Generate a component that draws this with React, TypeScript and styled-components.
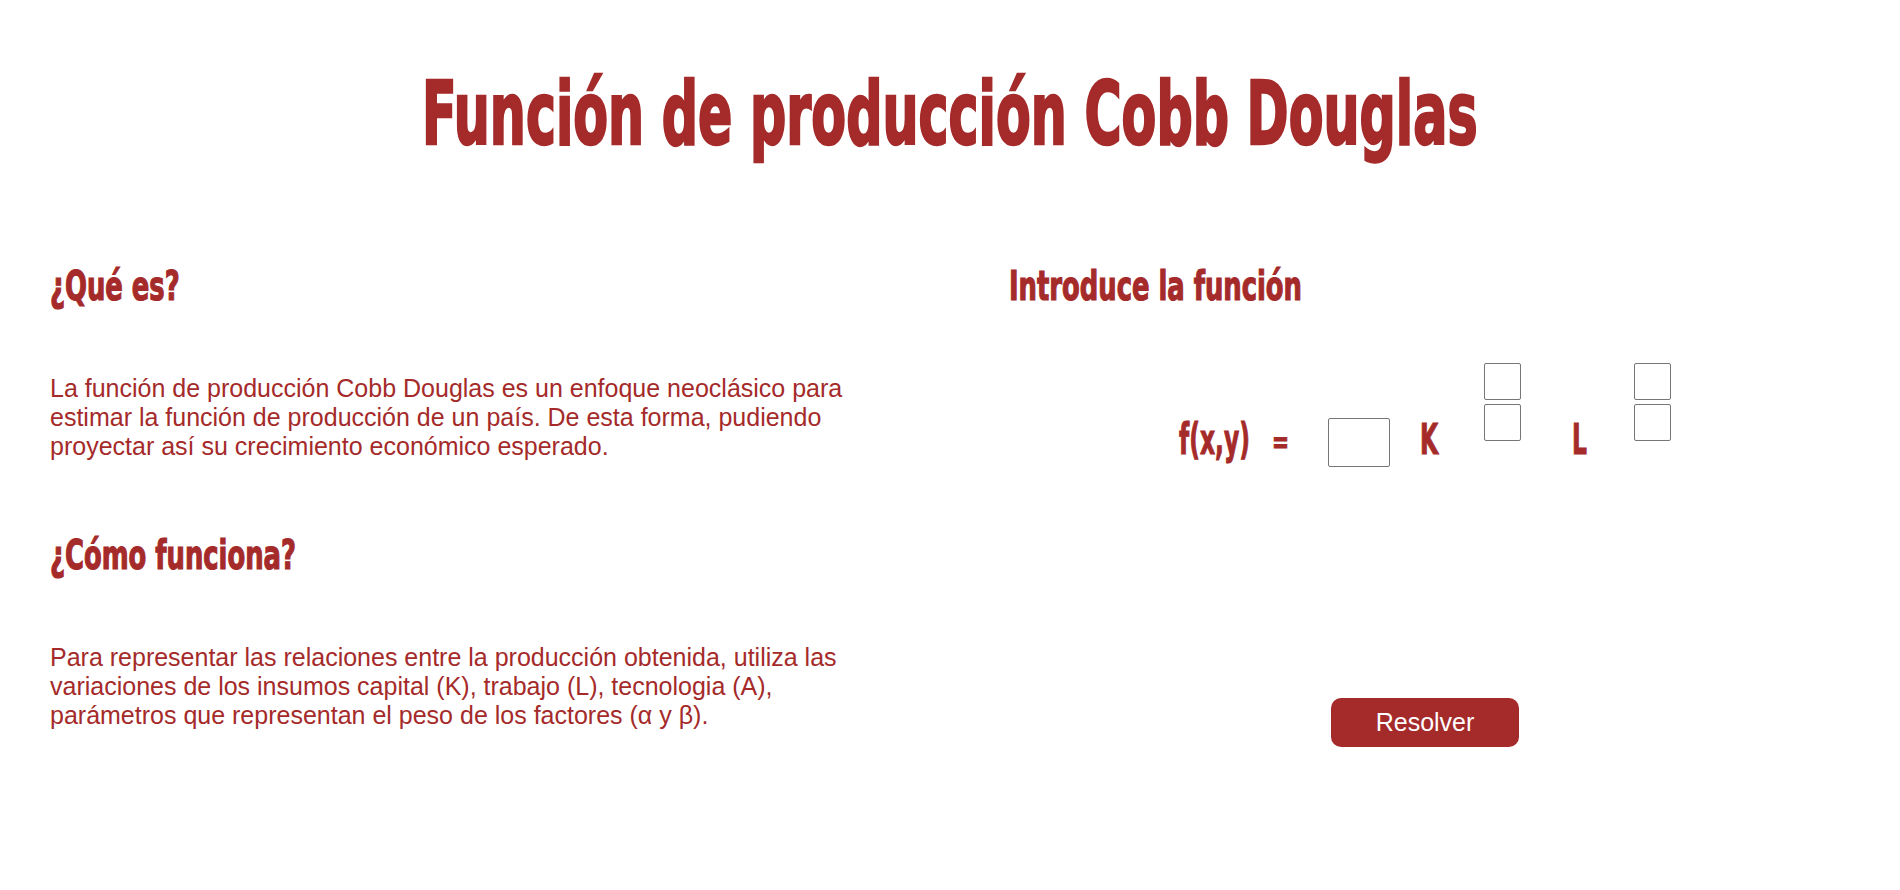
import React from "react";
import styled, { createGlobalStyle } from "styled-components";

const GlobalStyle = createGlobalStyle`
  html, body {
    margin: 0;
    padding: 0;
    background: #ffffff;
  }
  body {
    font-family: "Liberation Sans", Arial, sans-serif;
    color: #a52a2a;
  }
  * { box-sizing: border-box; }
`;

const BRAND = "#a52a2a";
const CONDENSED = `"Liberation Sans Narrow", "DejaVu Sans Condensed", "Liberation Sans", sans-serif`;

const Page = styled.main`
  width: 100%;
  min-height: 890px;
  padding-top: 70px;
`;

const Title = styled.h1`
  margin: 0 auto;
  width: fit-content;
  font-family: ${CONDENSED};
  font-weight: 700;
  font-size: 88px;
  line-height: 1;
  color: ${BRAND};
  -webkit-text-stroke: 2.5px ${BRAND};
  white-space: nowrap;
  transform: scaleX(0.64);
  transform-origin: center;
`;

const Columns = styled.div`
  display: grid;
  grid-template-columns: 1fr 1fr;
  margin-top: 108px;
`;

const Column = styled.section`
  display: flex;
  flex-direction: column;
  align-items: flex-start;
`;

const LeftColumn = styled(Column)`
  padding-left: 50px;
  padding-right: 40px;
`;

const RightColumn = styled(Column)`
  align-items: center;
`;

const Heading = styled.h2<{ $mt?: number; $indent?: number }>`
  margin: ${(p) => p.$mt ?? 0}px 0 0 ${(p) => p.$indent ?? 0}px;
  align-self: flex-start;
  width: fit-content;
  font-family: ${CONDENSED};
  font-weight: 700;
  font-size: 41px;
  line-height: 1;
  color: ${BRAND};
  -webkit-text-stroke: 1.2px ${BRAND};
  white-space: nowrap;
  transform: scaleX(0.7);
  transform-origin: left center;
`;

const Paragraph = styled.p`
  margin: 67px 0 0 0;
  max-width: 820px;
  font-family: "Liberation Sans", Arial, sans-serif;
  font-size: 25px;
  line-height: 29px;
  color: ${BRAND};
`;

const Formula = styled.div`
  display: flex;
  align-items: flex-start;
  margin-top: 56px;
  height: 104px;
`;

const Symbol = styled.span<{ $ml?: number; $w: number }>`
  display: block;
  flex: none;
  width: ${(p) => p.$w}px;
  margin-left: ${(p) => p.$ml ?? 0}px;
  margin-top: 56px;
  font-family: ${CONDENSED};
  font-weight: 700;
  font-size: 42px;
  line-height: 1;
  color: ${BRAND};
  -webkit-text-stroke: 1px ${BRAND};
  white-space: nowrap;
  transform: scaleX(0.62);
  transform-origin: left center;
`;

const Equals = styled(Symbol)`
  font-size: 30px;
  margin-top: 64px;
  transform: scaleX(0.75);
`;

const Field = styled.input<{ $w: number; $h: number }>`
  display: block;
  flex: none;
  width: ${(p) => p.$w}px;
  height: ${(p) => p.$h}px;
  padding: 0 4px;
  border: 1px solid #767676;
  border-radius: 2px;
  background: #ffffff;
  font-family: "Liberation Sans", Arial, sans-serif;
  font-size: 16px;
  color: #222;
  outline: none;
`;

const MainField = styled(Field)<{ $ml: number }>`
  margin-left: ${(p) => p.$ml}px;
  margin-top: 55px;
`;

const ExponentStack = styled.div<{ $ml: number }>`
  display: flex;
  flex-direction: column;
  flex: none;
  gap: 4px;
  margin-left: ${(p) => p.$ml}px;
`;

const SolveButton = styled.button`
  margin-top: 231px;
  width: 188px;
  height: 49px;
  border: none;
  border-radius: 10px;
  background: ${BRAND};
  color: #ffffff;
  font-family: "Liberation Sans", Arial, sans-serif;
  font-size: 25px;
  cursor: pointer;
`;

export default function App() {
  return (
    <>
      <GlobalStyle />
      <Page>
        <Title>Función de producción Cobb Douglas</Title>
        <Columns>
          <LeftColumn>
            <Heading>¿Qué es?</Heading>
            <Paragraph>
              La función de producción Cobb Douglas es un enfoque neoclásico para
              estimar la función de producción de un país. De esta forma, pudiendo
              proyectar así su crecimiento económico esperado.
            </Paragraph>
            <Heading $mt={74}>¿Cómo funciona?</Heading>
            <Paragraph>
              Para representar las relaciones entre la producción obtenida, utiliza las
              variaciones de los insumos capital (K), trabajo (L), tecnologia (A),
              parámetros que representan el peso de los factores (α y β).
            </Paragraph>
          </LeftColumn>
          <RightColumn>
            <Heading $indent={59}>Introduce la función</Heading>
            <Formula>
              <Symbol $w={70}>f(x,y)</Symbol>
              <Equals $w={12} $ml={23}>=</Equals>
              <MainField $w={62} $h={49} $ml={44} aria-label="A" />
              <Symbol $w={17} $ml={30}>K</Symbol>
              <ExponentStack $ml={47}>
                <Field $w={37} $h={37} aria-label="alfa numerador" />
                <Field $w={37} $h={37} aria-label="alfa denominador" />
              </ExponentStack>
              <Symbol $w={13} $ml={51}>L</Symbol>
              <ExponentStack $ml={49}>
                <Field $w={37} $h={37} aria-label="beta numerador" />
                <Field $w={37} $h={37} aria-label="beta denominador" />
              </ExponentStack>
            </Formula>
            <SolveButton>Resolver</SolveButton>
          </RightColumn>
        </Columns>
      </Page>
    </>
  );
}
